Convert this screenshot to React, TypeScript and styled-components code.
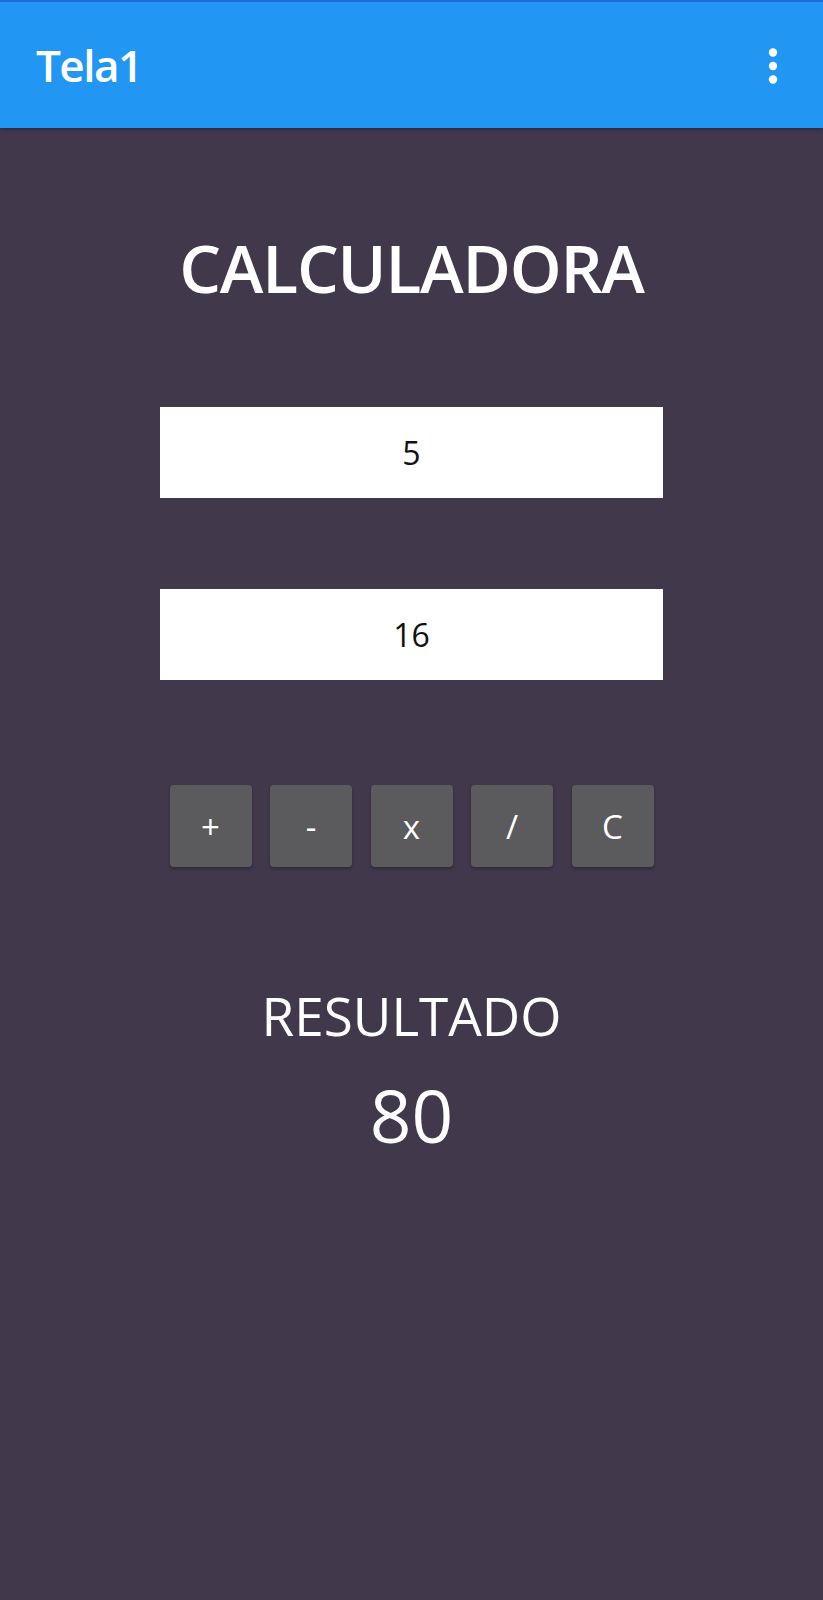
import styled, { createGlobalStyle } from "styled-components";

const GlobalStyle = createGlobalStyle`
  html, body {
    margin: 0;
    padding: 0;
    background: #41384b;
  }
  body {
    font-family: "Open Sans", "Noto Sans", sans-serif;
  }
`;

const operations = ["+", "-", "x", "/", "C"];

function App() {
  return (
    <Screen>
      <GlobalStyle />
      <AppBar>
        <BarTitle>Tela1</BarTitle>
        <MenuButton aria-label="menu">
          <svg width="16" height="44" viewBox="0 0 16 44">
            <circle cx="8" cy="8.5" r="4.2" fill="#fff" />
            <circle cx="8" cy="22" r="4.2" fill="#fff" />
            <circle cx="8" cy="35.5" r="4.2" fill="#fff" />
          </svg>
        </MenuButton>
      </AppBar>
      <Content>
        <Heading>CALCULADORA</Heading>
        <NumberField type="text" defaultValue="5" />
        <NumberField type="text" defaultValue="16" $spaced />
        <ButtonRow>
          {operations.map((op) => (
            <OpButton key={op}>{op}</OpButton>
          ))}
        </ButtonRow>
        <ResultLabel>RESULTADO</ResultLabel>
        <ResultValue>80</ResultValue>
      </Content>
    </Screen>
  );
}

const Screen = styled.div`
  min-height: 1600px;
  background: #41384b;
  display: flex;
  flex-direction: column;
`;

const AppBar = styled.header`
  height: 128px;
  box-sizing: border-box;
  border-top: 2px solid #1b6fd8;
  background: #2196f3;
  display: flex;
  align-items: center;
  justify-content: space-between;
  padding: 0 42px 0 36px;
  box-shadow: 0 2px 3px rgba(20, 30, 60, 0.45);
  position: relative;
  z-index: 1;
`;

const BarTitle = styled.h1`
  margin: 0;
  color: #fff;
  font-size: 44px;
  font-weight: 600;
  letter-spacing: -1.5px;
  line-height: 1;
`;

const MenuButton = styled.div`
  display: flex;
  align-items: center;
  padding-top: 1px;
`;

const Content = styled.main`
  display: flex;
  flex-direction: column;
  align-items: center;
  padding-top: 106px;
`;

const Heading = styled.h2`
  margin: 0 0 107px;
  color: #fff;
  font-size: 66px;
  font-weight: 600;
  letter-spacing: -1.2px;
  line-height: 1;
`;

const NumberField = styled.input<{ $spaced?: boolean }>`
  width: 503px;
  height: 91px;
  box-sizing: border-box;
  margin-top: ${(p) => (p.$spaced ? "91px" : "0")};
  border: 0;
  outline: none;
  background: #fff;
  color: #111;
  font-family: "Open Sans", "Noto Sans", sans-serif;
  font-size: 32px;
  text-align: center;
  padding: 0;
`;

const ButtonRow = styled.div`
  display: flex;
  gap: 18.5px;
  margin-top: 105px;
`;

const OpButton = styled.button`
  width: 82px;
  height: 82px;
  border: 0;
  border-radius: 4px;
  background: #5b5a5d;
  color: #fff;
  font-family: "Open Sans", "Noto Sans", sans-serif;
  font-size: 33px;
  line-height: 1;
  box-shadow: 0 2px 3px rgba(0, 0, 0, 0.25);
  cursor: pointer;
  padding: 0;
`;

const ResultLabel = styled.p`
  margin: 122px 0 0;
  color: #fff;
  font-size: 53px;
  line-height: 1;
`;

const ResultValue = styled.p`
  margin: 36px 0 0;
  color: #fff;
  font-size: 73px;
  line-height: 1;
`;

export default App;
